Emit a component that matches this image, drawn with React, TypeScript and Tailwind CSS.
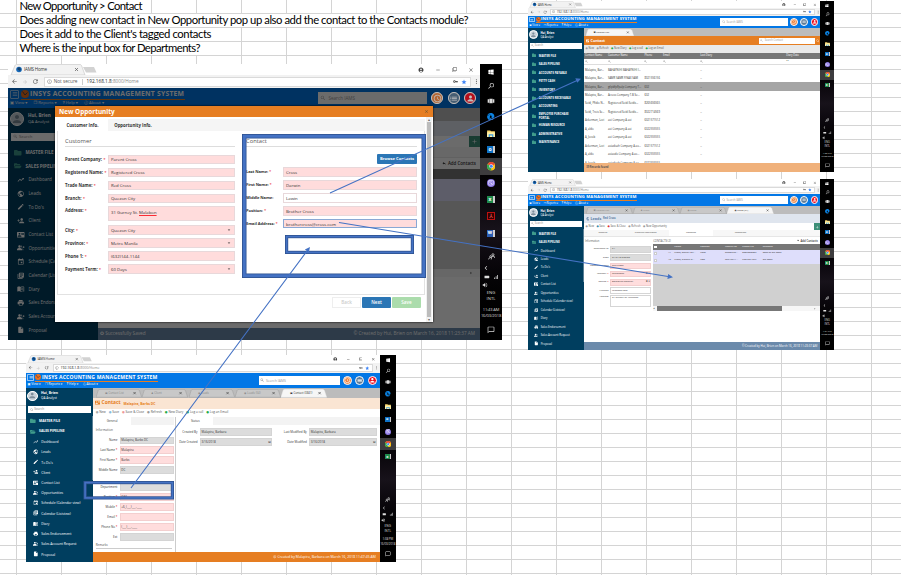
import type { ReactNode } from "react";
import { FaWindows, FaEdge, FaViber, FaFolder, FaFolderOpen } from "react-icons/fa";
import {
  MdTrendingUp, MdPublic, MdEdit, MdPersonAdd, MdContactMail, MdGroupAdd, MdEvent, MdLibraryBooks,
  MdMenuBook, MdPrint, MdInsertDriveFile, MdPerson, MdSearch, MdArrowBack, MdArrowForward, MdRefresh,
  MdInfoOutline, MdClose, MdRemove, MdFilterNone, MdAccountCircle, MdVpnKey, MdStar, MdMoreVert,
  MdMenu, MdAccessTime, MdList, MdArrowDropDown, MdArrowRight, MdAdd, MdReply, MdVolumeUp, MdChevronLeft,
  MdBatteryFull, MdSignalCellularAlt, MdChatBubbleOutline, MdCopyright, MdViewCarousel,
} from "react-icons/md";

const ORANGE = "bg-[#e67e22]";

/* ---------- taskbar ---------- */

function ChromeIcon() {
  return (
    <svg viewBox="0 0 20 20" className="size-[8.500px]">
      <circle cx="10" cy="10" r="10" fill="#fbc116" />
      <path d="M10 10 1.3 5A10 10 0 0 1 18.7 5Z" fill="#ea4335" />
      <path d="M10 10 1.3 5A10 10 0 0 0 10 20Z" fill="#34a853" />
      <circle cx="10" cy="10" r="4.6" fill="#fff" />
      <circle cx="10" cy="10" r="3.6" fill="#4285f4" />
    </svg>
  );
}

function Tile({ color, letter }: { color: string; letter: string }) {
  return (
    <span className="flex h-[7px] w-[8px] border-r-2 border-white/80">
      <span className={`flex h-full w-full items-center justify-center text-[5px] font-bold text-white ${color}`}>{letter}</span>
    </span>
  );
}

function ExplorerIcon() {
  return (
    <svg viewBox="0 0 20 18" className="h-[7px] w-[8px]">
      <path d="M0 1h8l2 2h10v15H0z" fill="#f8d56b" />
      <path d="M0 6h20v12H0z" fill="#fff0a8" />
      <path d="M4 11h12v7h-3v-4H7v4H4z" fill="#3b9be0" />
    </svg>
  );
}

const APP_ICONS: Record<string, ReactNode> = {
  edge: <FaEdge className="size-[7.500px] text-[#0c84e4]" />,
  explorer: <ExplorerIcon />,
  outlook: <Tile color="bg-[#0e72c6]" letter="o" />,
  chrome: <ChromeIcon />,
  viber: (
    <span className="flex size-[8px] items-center justify-center rounded-full bg-[#8f7be8]">
      <FaViber className="size-[6px] text-white" />
    </span>
  ),
  excel: <Tile color="bg-[#1f8a4c]" letter="x" />,
  adobe: <span className="flex size-[8px] items-center justify-center border border-[#b11] bg-[#300] text-[6px] text-[#f66]">⅄</span>,
  word: <Tile color="bg-[#2b5eb4]" letter="w" />,
};

function Taskbar({ apps, time }: { apps: string[]; time: string }) {
  return (
    <div className="flex w-[22px] shrink-0 flex-col items-center bg-linear-to-b from-black from-20% via-[#17121a] via-60% to-black text-[#ddd]">
      <div className="flex h-[15px] items-center"><FaWindows className="size-[6px] text-white" /></div>
      <div className="flex h-[14px] items-center"><MdSearch className="size-[8px] -scale-x-100" /></div>
      <div className="flex h-[15px] items-center"><MdViewCarousel className="size-[8px]" /></div>
      {apps.map((a) => (
        <div key={a} className={a === "chrome" ? "flex h-[16.7px] w-full items-center justify-center bg-[#3d3c3e]" : "flex h-[16.7px] w-full items-center justify-center"}>
          {APP_ICONS[a]}
        </div>
      ))}
      <svg viewBox="0 0 12 12" className="mt-auto mb-[3px] size-[7px]">
        <g fill="none" stroke="#ddd" strokeWidth="1.300"><circle cx="8.500" cy="3" r="1.800" /><circle cx="4.500" cy="6" r="1.500" /><path d="M5.500 11q0-5 3-5.500t3 3M1 11q.5-3.500 3.500-3.500" /></g>
      </svg>
      <div className="flex h-[10px] w-full items-center pl-[2px]"><MdChevronLeft className="size-[8px]" /></div>
      <div className="flex h-[8px] items-center gap-[3px]"><MdBatteryFull className="size-[6px] rotate-90" /><MdSignalCellularAlt className="size-[6px]" /></div>
      <div className="flex h-[8px] w-full items-center pl-[2px]"><MdVolumeUp className="size-[6px]" /></div>
      <div className="mt-[1px] text-center text-[4.2px] leading-[6px]">ENG<br />INTL</div>
      <div className="mt-[5px] text-center text-[4px] leading-[6px] tracking-[-0.1px] whitespace-nowrap">{time}<br />16/03/2018</div>
      <div className="flex h-[21px] items-center"><MdChatBubbleOutline className="size-[8px]" /></div>
    </div>
  );
}

/* ---------- browser and application header ---------- */

function BrowserBar({ insecure }: { insecure?: boolean }) {
  return (
    <>
      <div className="flex h-[11px] items-end bg-white pl-[2px] text-[#444]">
        <svg viewBox="0 0 90 11" className="h-[11px] w-[90px] shrink-0">
          <path d="M1 11 5 1.5Q5.500 .5 6.500 .5H70Q71 .5 71.500 1.500L75 11Z" fill="#f2f2f2" stroke="#c4c4c4" strokeWidth=".6" />
          <path d="M73 3h11l2.500 5.500H76Z" fill="#d2d2d2" />
          <circle cx="9" cy="5.500" r="2.800" fill="#1769b8" />
          <path d="M7 5 9 3l2 2-1 2z" fill="#123e6b" />
          <text x="14" y="7.300" fontSize="4.500" fill="#333" textLength="23">IAMS Home</text>
          <path d="m65 4 3 3m0-3-3 3" stroke="#555" strokeWidth=".7" />
        </svg>
        <div className="ml-auto flex h-full items-center gap-[11px] pr-[6px]">
          <MdAccountCircle className="size-[6px]" /><MdRemove className="size-[6px]" /><MdFilterNone className="size-[5px]" /><MdClose className="size-[6px]" />
        </div>
      </div>
      <div className="flex h-[13px] items-center bg-[#f2f2f2] pl-[3px] text-[#555]">
        <MdArrowBack className="mr-[4px] size-[7px]" />
        <MdArrowForward className="mr-[4px] size-[6px] text-[#c4c4c4]" />
        <MdRefresh className="mr-[5px] size-[7px]" />
        <div className="flex h-[10px] w-[433px] items-center border border-[#dadada] bg-white pl-[2px] text-[4.7px] whitespace-nowrap">
          <MdInfoOutline className="mr-[2px] size-[5px]" />
          {insecure && <><span>Not secure</span><span className="mx-[4px] h-[6px] w-px bg-[#ccc]" /></>}
          <span className="text-[#222]">192.168.1.8</span><span className="text-[#888]">:8000/Home</span>
          <MdVpnKey className="ml-auto size-[5px]" /><MdStar className="mx-[3px] size-[6px] text-[#3b82f6]" />
        </div>
        <MdMoreVert className="ml-[2px] size-[7px]" />
      </div>
    </>
  );
}

function HeaderButtons() {
  const ring = "flex size-[12px] items-center justify-center rounded-full border border-white text-white";
  return (
    <div className="flex gap-[4.300px]">
      <span className={`${ring} bg-[#ee8540]`}><MdAccessTime className="size-[9px]" /></span>
      <span className={`${ring} bg-[#5f7d99]`}><MdList className="size-[9px]" /></span>
      <span className={`${ring} bg-[#ee1122]`}><MdPerson className="size-[9px]" /></span>
    </div>
  );
}

function AppHeader() {
  return (
    <div className="flex h-[19.500px] shrink-0 bg-[#0277e6] text-white">
      <div className="flex flex-col pl-[2px]">
        <div className="flex h-[12px] items-center">
          <span className="flex size-[9px] items-center justify-center rounded-[1px] border border-white/60"><MdMenu className="size-[6px]" /></span>
          <div className="ml-[1.500px] flex h-[11.500px] items-center border-b border-[#e67e22]">
            <svg viewBox="0 0 16 16" className="size-[8px]">
              <circle cx="8" cy="8" r="8" fill="#f0701a" />
              <path d="m3 3 5 7 5-5" stroke="#55404a" strokeWidth="2" fill="none" />
            </svg>
            <svg className="ml-[1px] h-[9px] w-[155px]">
              <text x="0" y="7" fontSize="6.800" fontWeight="700" fill="#fff" textLength="154">INSYS ACCOUNTING MANAGEMENT SYSTEM</text>
            </svg>
          </div>
        </div>
        <div className="flex items-center gap-[6px] text-[4.200px] leading-[6.500px]">
          <span>▣ View ▾</span><span>❐ Reports ▾</span><span><b>?</b> Help ▾</span><span>ⓘ About ▾</span>
        </div>
      </div>
      <div className="mt-[4px] ml-auto flex h-[12px] w-[109px] items-center bg-white pl-[2px] text-[4.600px] text-[#999]">
        <MdSearch className="mr-[2px] size-[6px]" />Search IAMS
      </div>
      <div className="mt-[4px] mr-[4px] ml-[4px]"><HeaderButtons /></div>
    </div>
  );
}

/* ---------- sidebar ---------- */

const PIPELINE: [ReactNode, string][] = [
  [<MdTrendingUp />, "Dashboard"], [<MdPublic />, "Leads"], [<MdEdit />, "To Do's"], [<MdPersonAdd />, "Client"],
  [<MdContactMail />, "Contact List"], [<MdGroupAdd />, "Opportunities"], [<MdEvent />, "Schedule (Calendar view)"],
  [<MdLibraryBooks />, "Calendar (Listview)"], [<MdMenuBook />, "Diary"], [<MdPrint />, "Sales Endorsement"],
  [<MdGroupAdd />, "Sales Account Request"], [<MdInsertDriveFile />, "Proposal"],
];
const MODULES = ["MASTER FILE", "SALES PIPELINE", "ACCOUNTS PAYABLE", "PETTY CASH", "INVENTORY", "ACCOUNTS RECEIVABLE", "ACCOUNTING", "EMPLOYEE PURCHASE PORTAL", "HUMAN RESOURCE", "ADMINISTRATIVE", "MAINTENANCE"];

function Folder({ name, open }: { name: string; open?: boolean }) {
  const cls = "mr-[4px] size-[7.500px] shrink-0 text-[#3f9c8c]";
  return (
    <div className={`flex items-center pr-[14px] pl-[6px] text-[4.500px] leading-[6.500px] font-bold ${name.length > 20 ? "h-[17px]" : "h-[13.680px]"}`}>
      {open ? <FaFolderOpen className={cls} /> : <FaFolder className={cls} />}{name}
    </div>
  );
}

function Sidebar({ modules }: { modules?: boolean }) {
  return (
    <div className="flex w-[90px] shrink-0 flex-col overflow-hidden bg-[#003e5f] text-white">
      <div className="flex h-[22px] shrink-0 items-center pl-[2px]">
        <span className="flex size-[14px] items-end justify-center overflow-hidden rounded-full border border-white bg-[#c9d2d9]"><MdPerson className="size-[12px] text-[#7d8d9a]" /></span>
        <div className="ml-[4px] text-[4.600px] leading-[6.500px]"><b>Hui, Brien</b><br /><span className="text-[4.200px]">QA Analyst</span></div>
      </div>
      <div className="mx-[3px] mt-[3px] flex h-[8.500px] shrink-0 items-center bg-white pl-[2px] text-[4.200px] text-[#888]"><MdSearch className="mr-[1px] size-[5px]" />Search</div>
      <div className="mt-[4.500px] flex grow justify-between">
        <div>
          {modules ? MODULES.map((m) => <Folder key={m} name={m} />) : (
            <>
              <Folder name="MASTER FILE" />
              <Folder name="SALES PIPELINE" open />
              {PIPELINE.map(([icon, name]) => (
                <div key={name} className="flex h-[13.680px] items-center pl-[9px] text-[4.500px] whitespace-nowrap">
                  <span className="mr-[4px] text-[7.500px]">{icon}</span>{name}
                </div>
              ))}
            </>
          )}
        </div>
        {!modules && <div className="h-[85px] w-[1.500px] bg-[#5a7f95]" />}
      </div>
    </div>
  );
}

function TabStrip({ tabs, width }: { tabs: string[]; width: number }) {
  return (
    <div className="flex h-[13.500px] shrink-0 items-end bg-[#bcbcbc] pl-[3px]">
      {tabs.map((t, i) => {
        const on = i === tabs.length - 1;
        return (
          <svg key={t + i} viewBox={`0 0 ${width} 11`} className="h-[11px]" style={{ width }}>
            <path d={`M0 11 3 1.500Q3.500 .5 5 .5H${width - 7}Q${width - 5} .5 ${width - 4} 2L${width - 1} 11Z`} fill={on ? "#f6f6f6" : "#c8c8c8"} stroke={on ? "#eee" : "#999"} strokeWidth=".6" />
            <text x="12" y="7" fontSize="3.800" fill={on ? "#333" : "#888"}>{t}</text>
            <path d={`m${width - 12} 4 3 3m0-3-3 3`} stroke="#555" strokeWidth="1" />
          </svg>
        );
      })}
    </div>
  );
}

function Tools({ items }: { items: [string, string][] }) {
  return (
    <div className="flex items-center gap-[4px] pl-[3px] text-[4.200px] whitespace-nowrap text-[#555]">
      {items.map(([label, color]) => <span key={label}><span className={color}>● </span>{label}</span>)}
    </div>
  );
}

/* ---------- pages ---------- */

const CONTACT_ROWS = [
  ["Malapira, Bar...", "BAHAYNIHI BAHAYNIHI I...", ""], ["Malapira, Bar...", "SAMR SAMR FINAX SAM", "8321556156"],
  ["Malapira, Bar...", "gtlpbfplfpalp Company T...", "632"], ["Malapira, Bar...", "Access Company T.B Se...", "632"],
  ["Seidi, Pfidio N...", "Registered Seidi Seidis...", "8265656565"], ["Seidi, Trois Se...", "Registered Seidi Seidis...", "8322714569"],
  ["Ackerman, Levi", "aoi Company A aoi", "6321571512"], ["A, aldo", "aoi Company A aoi", "6322555555"],
  ["A, Jocob", "aoi Company A aoi", "6322555555"], ["Ackerman, Levi", "aoiadoah Company A ao...", "6321571512"],
  ["A, aldo", "aoiaodo Company A ao...", "6322555555"], ["A, Jocob", "aoiadoah Company A ao...", "6322555555"],
];
const LIST_GRID = "grid grid-cols-[37px_59px_30px_60px_139px_1fr] items-center pl-[2px] whitespace-nowrap";

function ContactListPage() {
  return (
    <>
      <TabStrip tabs={["▣ Contact List"]} width={78} />
      <div className={`flex h-[14.500px] items-center pl-[3px] text-[6px] font-bold text-white ${ORANGE}`}>
        <MdContactMail className="mr-[2px] size-[6px]" />Contact
        <div className="ml-auto flex h-[9px] w-[91px] items-center bg-white pl-[2px] text-[4.200px] font-normal text-[#999]"><MdSearch className="mr-[2px] size-[5px]" />Search Contact</div>
        <MdSearch className="mx-[1px] size-[6px]" />
      </div>
      <div className="flex h-[12px] bg-[#e9e9e9]"><Tools items={[["New", "text-[#999]"], ["Refresh", "text-[#999]"], ["New Diary", "text-[#2a4]"], ["Log a call", "text-[#2a4]"], ["Log an Email", "text-[#2a4]"]]} /></div>
      <div className={`${LIST_GRID} h-[9.500px] bg-[#777] text-[4.200px] text-white`}>
        <span>Contact Name</span><span>Customer Name</span><span>Phone</span><span>Email</span><span>Last Diary</span><span>Diary Date</span>
      </div>
      <div className={`${LIST_GRID} h-[11px] border-b border-[#ddd] text-[5px] text-[#777]`}>
        <MdSearch /><MdSearch /><MdSearch /><MdSearch /><MdSearch /><span>••</span>
      </div>
      <div className="h-[158px] overflow-hidden">
        {CONTACT_ROWS.map((r, i) => (
          <div key={i} className={`${LIST_GRID} h-[13.680px] text-[4.400px] text-[#333] ${i === 2 ? "bg-[#a5a5a5]" : ""}`}>
            <span>{r[0]}</span><span>{r[1]}</span><span>{r[2]}</span><span /><span>--</span>
          </div>
        ))}
      </div>
      <div className="flex grow items-center bg-[#f0b17b] pl-[4px] text-[4.200px] font-bold text-[#555]">39 Records found</div>
    </>
  );
}

type Box = { label: string; value: string; tone: "gray" | "pink" | "white"; req?: boolean; icons?: string; tall?: boolean };
const TONES = { gray: "bg-[#dcdcdc] border-[#d4d4d4]", pink: "bg-[#ffdddd] border-[#f3cfcf]", white: "bg-white border-[#d5d5d5]" };

function FieldRow({ f, labelW }: { f: Box; labelW: string }) {
  return (
    <div className={`flex text-[4px] text-[#333] ${f.tall ? "h-[22px] items-start" : "h-[13.300px] items-center"}`}>
      <span className={`shrink-0 pr-[3px] text-right whitespace-nowrap ${labelW}`}>{f.label}{f.req && <span className="text-red-600"> *</span>}</span>
      <span className={`flex grow justify-between border px-[1px] whitespace-nowrap ${TONES[f.tone]} ${f.tall ? "h-[20px] items-start" : "h-[10.500px] items-center"}`}>
        <span>{f.value}</span><span>{f.icons}</span>
      </span>
    </div>
  );
}

const LEAD_FIELDS: Box[] = [
  { label: "Reference ID", value: "54", tone: "gray" }, { label: "Date", value: "3/16/18 0:00:00", tone: "gray" },
  { label: "Company Name", value: "Red Cross", tone: "pink" }, { label: "Industry", value: "Telephone", tone: "pink", req: true, icons: "✚ ▾" },
  { label: "Source", value: "Employee Referral", tone: "pink", req: true, icons: "✚ ▾" }, { label: "Website", value: "redcross.com", tone: "white" },
  { label: "Address", value: "31 Gurney St. Malabon", tone: "white", tall: true },
];
const LEAD_CONTACTS = [
  ["41", "Cross, Oakley Bu...", "COO", "09086565...", "8086808089", "Boss of Big Boss"],
  ["42", "Cross, Darwin D...", "CEO", "60912341...", "6327234567", "Big Boss"],
];
const LEAD_GRID = "grid grid-cols-[10px_22px_42px_40px_28px_33px_1fr] items-center pl-[2px] text-[4px] whitespace-nowrap";

/* With `covered` the dialog lies over the page, so only its bands and right edge are drawn. */
function LeadPage({ covered, credit }: { covered?: boolean; credit: string }) {
  return (
    <>
      <TabStrip tabs={covered ? [] : ["▣ Contact List", "♟ Client", "◉ Leads", "◉ Leads (54)"]} width={76} />
      <div className="flex h-[14.500px] items-center bg-[#dfe5ee] pl-[3px] text-[6px] font-bold text-[#5d7fa5]">
        {!covered && <><MdPublic className="mr-[2px] size-[6px]" />Leads<span className="ml-[3px] text-[4.200px]">Red Cross</span></>}
      </div>
      <div className="flex h-[11px] justify-between">
        <Tools items={covered ? [] : [["New", "text-[#999]"], ["Save", "text-[#38a]"], ["Save & Close", "text-[#d33]"], ["Refresh", "text-[#999]"], ["New Opportunity", "text-[#999]"]]} />
        <span className="flex w-[11px] items-center justify-center bg-[#3d8f78] text-[7px] text-white"><MdAdd /></span>
      </div>
      <div className="flex h-[11.500px] items-center border-b border-[#e6e6e6] bg-[#f7f7f7] text-center text-[4px] text-[#444]">
        {!covered && <><span className="w-[62px]">General</span><span className="w-[76px]">Product/Interested</span><span className="flex h-full w-[70px] items-center justify-center bg-white">Contacts</span><span className="w-[90px]">Comment</span></>}
      </div>
      <div className="flex grow overflow-hidden bg-white">
        <div className="w-[112px] pr-[3px] pl-[2px]">
          {!covered && (
            <>
              <div className="h-[13px] pt-[5px] text-[4.200px] leading-[5px] text-[#555]">Information</div>
              {LEAD_FIELDS.map((f) => <FieldRow key={f.label} f={f} labelW="w-[41px]" />)}
            </>
          )}
        </div>
        <div className="flex grow flex-col">
          <div className="flex h-[11px] items-center justify-between pr-[4px] text-[4.400px] text-[#555]"><span>{!covered && "CONTACTS (2)"}</span><span className="flex items-center font-semibold text-[#333]"><MdReply className="mr-[2px]" />Add Contacts</span></div>
          <div className="h-[100px] bg-[#d0d0d0]">
            <div className={`${LEAD_GRID} h-[9.500px] bg-[#777] text-white`}>
              {!covered && <><span className="size-[4px] border bg-white" /><span /><span>Name</span><span>Position</span><span>Mobile No</span><span>Phone No</span><span>Remarks</span></>}
            </div>
            {LEAD_CONTACTS.map((r) => (
              <div key={r[0]} className={`${LEAD_GRID} h-[11px] bg-[#dedefb] text-[#333]`}>
                {!covered && <><span className="size-[5px] border border-[#ccc] bg-white" /><span className="pl-[12px]">{r[0]}</span>{r.slice(1).map((c) => <span key={c}>{c}</span>)}</>}
              </div>
            ))}
          </div>
          <div className="flex h-[8px] items-center bg-[#f6f6f6] text-[6px] text-[#444]"><span className="w-[6px] text-[4px]">◂</span><div className="h-[7px] w-[202px] bg-[#777]" /><MdArrowRight className="mr-[6px] ml-auto" /></div>
        </div>
      </div>
      <div className="flex h-[12.500px] shrink-0 items-center justify-between bg-[#6b8aab] pr-[5px] pl-[2px] text-[4.700px] text-white">
        <span>{covered && "✪ Successfully Saved"}</span><span>© Created by Hui, Brien on March 16, 2018 {credit}</span>
      </div>
    </>
  );
}

const CONTACT_TOP: Box[] = [
  { label: "Name", value: "Malapira, Barbs DC", tone: "gray" }, { label: "Last Name", value: "Malapira", tone: "pink", req: true },
  { label: "First Name", value: "Barbs", tone: "pink", req: true }, { label: "Middle Name", value: "DC", tone: "gray" },
];
const CONTACT_BOTTOM: Box[] = [
  { label: "Department", value: "", tone: "gray" }, { label: "Position", value: "QA1", tone: "pink", req: true },
  { label: "Mobile", value: "+6_(___)___-____", tone: "pink", req: true }, { label: "Email", value: "", tone: "pink", req: true },
  { label: "Phone No", value: "(___)___-____", tone: "pink", req: true }, { label: "Ext", value: "", tone: "gray" },
];

function ContactPage() {
  return (
    <>
      <TabStrip tabs={["▣ Contact List", "♟ Client", "◉ Leads", "◉ Leads (54)", "▣ Contact (3841)"]} width={62} />
      <div className="flex h-[14.500px] items-center bg-[#fae5d3] pl-[2px] text-[6.500px] font-bold text-[#e67e22]">
        <MdContactMail className="mr-[2px] size-[7px]" />Contact<span className="ml-[4px] text-[4.500px]">Malapira, Barbs DC</span>
      </div>
      <div className="flex h-[11.500px]"><Tools items={[["New", "text-[#aaa]"], ["Save", "text-[#8bd]"], ["Save & Close", "text-[#e99]"], ["Refresh", "text-[#999]"], ["New Diary", "text-[#2a4]"], ["Log a call", "text-[#2a4]"], ["Log an Email", "text-[#2a4]"]]} /></div>
      <div className="flex grow overflow-hidden">
        <div className="w-[110px] shrink-0 border-r-[1.500px] border-[#ccc] pr-[1.500px]">
          <div className="flex h-[10.500px] text-[4px] text-[#444]"><span className="w-[50px] pt-[2px] text-center">General</span><span className="grow bg-[#f3f3f3]" /></div>
          <div className="h-[14px] pt-[5px] pl-[3px] text-[4.200px] leading-[5px] text-[#555]">Information</div>
          {CONTACT_TOP.map((f) => <FieldRow key={f.label} f={f} labelW="w-[35px]" />)}
          <div className="h-[9px]" />
          {CONTACT_BOTTOM.map((f) => <FieldRow key={f.label} f={f} labelW="w-[35px]" />)}
          <div className="mr-[2px] ml-[3px] border-b border-[#ccc] text-[4px] leading-[9px] text-[#555]">Remarks</div>
        </div>
        <div className="grow pl-[2px]">
          <div className="flex h-[10.500px] text-[4px] text-[#444]"><span className="w-[48px] pt-[2px] text-center">Status</span><span className="grow bg-[#f3f3f3]" /></div>
          <div className="grid grid-cols-[127px_137px] gap-x-[3px] pt-[3px]">
            <FieldRow f={{ label: "Created By", value: "Malapira, Barbara", tone: "gray" }} labelW="w-[30px]" />
            <FieldRow f={{ label: "Last Modified By", value: "Malapira, Barbara", tone: "gray" }} labelW="w-[46px]" />
            <FieldRow f={{ label: "Date Created", value: "3/16/2018", tone: "gray", icons: "⊟" }} labelW="w-[30px]" />
            <FieldRow f={{ label: "Date Modified", value: "3/16/2018", tone: "gray", icons: "⊟" }} labelW="w-[46px]" />
          </div>
        </div>
      </div>
      <div className={`flex h-[12.500px] shrink-0 items-center justify-end gap-[1px] pr-[5px] text-[4.600px] text-white ${ORANGE}`}>
        <MdCopyright />Created by Malapira, Barbara on March 16, 2018 11:47:45 AM
      </div>
    </>
  );
}

/* ---------- new opportunity dialog ---------- */

function Input({ label, value, req = true, select, contact, tall, focus }: { label: string; value: ReactNode; req?: boolean; select?: boolean; contact?: boolean; tall?: boolean; focus?: boolean }) {
  return (
    <div className={`flex text-[4.300px] ${tall ? "h-[19px] items-start pt-[1px]" : "h-[12.950px] items-center"}`}>
      <span className={`shrink-0 font-bold whitespace-nowrap text-[#333] ${contact ? "w-[37px] text-[4.100px] tracking-[-0.1px]" : "w-[43px]"} ${tall ? "pt-[1px]" : ""}`}>{label} {req && <span className="font-normal text-red-600">*</span>}</span>
      <span className={`flex grow justify-between border px-[2px] text-[#333] ${req ? "bg-[#ffdcdc]" : "bg-white"} ${focus ? "border-[#8aa8d4]" : "border-[#e8d8da]"} ${tall ? "h-[15px] items-start pt-[2px]" : "h-[9.500px] items-center"}`}>
        <span>{value}</span>{select && <MdArrowDropDown className="size-[6px]" />}
      </span>
    </div>
  );
}

function OpportunityDialog() {
  return (
    <div className="absolute top-[42px] left-[47px] flex h-[216px] w-[378px] flex-col bg-white shadow-[0_0_2px_#000]">
      <div className={`flex h-[11px] shrink-0 items-center justify-between pr-[4px] pl-[4px] text-[6.400px] font-bold text-white ${ORANGE}`}>New Opportunity<MdClose className="size-[5px] text-[#653]" /></div>
      <div className="flex grow">
        <div className="flex grow flex-col pl-[2px]">
          <div className="mt-[2px] flex h-[12px] items-center bg-[#f5f5f5] text-[4.300px] font-bold text-[#333]">
            <span className="flex h-full w-[51px] items-center justify-center bg-white">Customer Info.</span><span className="w-[50px] text-center">Opportunity Info.</span>
          </div>
          <div className="flex h-[164px] border border-t-0 border-[#e2e2e2] pl-[7px]">
            <div className="w-[170px]">
              <div className="mb-[6px] h-[16px] border-b border-[#ddd] pt-[6px] text-[5.800px] leading-[8px] text-[#555]">Customer</div>
              <Input label="Parent Company:" value="Parent Cross" />
              <Input label="Registered Name:" value="Registered Cross" />
              <Input label="Trade Name:" value="Red Cross" />
              <Input label="Branch:" value="Quezon City" />
              <Input label="Address:" value={<>31 Gurney St. <u className="decoration-red-500">Malabon</u></>} tall />
              <Input label="City:" value="Quezon City" select />
              <Input label="Province:" value="Metro Manila" select />
              <Input label="Phone 1:" value="(632)144-1144" />
              <Input label="Payment Term:" value="60 Days" select />
            </div>
            <div className="ml-[11px] w-[171px]">
              <div className="h-[16px] border-b border-[#ddd] pt-[6px] text-[5.800px] leading-[8px] text-[#555]">Contact</div>
              <div className="mt-[7px] mb-[1.500px] ml-auto flex h-[10px] w-[40px] items-center justify-center rounded-[1px] bg-[#2b76b5] text-[4.100px] font-bold whitespace-nowrap text-white">Browse Contacts</div>
              <Input contact label="Last Name:" value="Cross" />
              <Input contact label="First Name:" value="Darwin" />
              <Input contact label="Middle Name:" value="Lawin" req={false} />
              <Input contact label="Position:" value="Brother Cross" />
              <Input contact label="Email Address:" value="brothercross@cross.com" focus />
            </div>
          </div>
          <div className="mt-[2px] flex justify-end gap-[1px] pr-[4px] text-[4.600px] font-semibold text-white">
            <span className="flex h-[11px] w-[29px] items-center justify-center border border-[#eee] text-[#ccc]">Back</span>
            <span className="flex h-[11px] w-[29px] items-center justify-center rounded-[1px] bg-[#2b76b5]">Next</span>
            <span className="flex h-[11px] w-[29px] items-center justify-center rounded-[1px] bg-[#abdcac]">Save</span>
          </div>
        </div>
        <div className="mx-[1px] flex w-[6px] flex-col items-center justify-between bg-[#f1f1f1] text-[4px] leading-[5px] text-[#666]"><span>▴</span><span className="w-[4px] grow bg-[#bcbcbc]" /><span>▾</span></div>
      </div>
    </div>
  );
}

/* ---------- pasted windows ---------- */

const APPS = ["edge", "explorer", "outlook", "viber", "chrome", "excel"];
const MAIN_APPS = ["edge", "explorer", "outlook", "chrome", "viber", "excel", "adobe", "word"];

function Screen({ children, modules, time, apps = APPS, dialog }: { children: ReactNode; modules?: boolean; time: string; apps?: string[]; dialog?: boolean }) {
  return (
    <div className="flex h-[276px] w-[494px] overflow-hidden bg-white">
      <div className="relative flex w-[472px] shrink-0 flex-col">
        <BrowserBar insecure={dialog} />
        <AppHeader />
        <div className="flex min-h-0 grow">
          <Sidebar modules={modules} />
          <div className="flex min-w-0 grow flex-col">{children}</div>
        </div>
        {dialog && (
          <>
            <div className="absolute inset-x-0 top-[24px] bottom-0 bg-black/58" />
            <div className="absolute top-[28px] right-[4px] brightness-75"><HeaderButtons /></div>
            <OpportunityDialog />
          </>
        )}
      </div>
      <Taskbar apps={apps} time={time} />
    </div>
  );
}

const NOTES: [string, string, number][] = [
  ["New Opportunity > Contact", "w-[134px]", 123], ["Does adding new contact in New Opportunity pop up also add the contact to the Contacts module?", "w-[494px]", 449],
  ["Does it add to the Client's tagged contacts", "w-[224px]", 192], ["Where is the input box for Departments?", "w-[224px]", 181],
];

function Frame({ x, y, w, h, t }: { x: number; y: number; w: number; h: number; t: number }) {
  return (
    <g fill="none">
      <rect x={x + t / 2} y={y + t / 2} width={w - t} height={h - t} stroke="#2f528f" strokeWidth={t} />
      <rect x={x + t / 2} y={y + t / 2} width={w - t} height={h - t} stroke="#4472c4" strokeWidth={t - 1.6} />
    </g>
  );
}

export default function App() {
  return (
    <div className="relative h-[575px] w-[901px] overflow-hidden bg-white [background-image:linear-gradient(to_right,#d4d4d4_1px,transparent_1px),linear-gradient(to_bottom,#d4d4d4_1px,transparent_1px)] [background-position:16px_13px] [background-size:45px_14px] font-['Open_Sans','DejaVu_Sans',sans-serif]">
      <div className="flex flex-col gap-px pl-[17px]">
        {NOTES.map(([text, width, length]) => (
          <div key={text} className={`h-[13px] bg-white ${width}`}>
            <svg className="h-[13px] w-full overflow-visible font-['Lato',sans-serif]">
              <text x="2.500" y="10" fontSize="11.300" fill="#000" textLength={length}>{text}</text>
            </svg>
          </div>
        ))}
      </div>
      <div className="absolute top-[64px] left-[8px]"><Screen time="11:43 AM" apps={MAIN_APPS} dialog><LeadPage covered credit="11:23:37 AM" /></Screen></div>
      <div className="absolute top-px left-[528px]"><div className="[zoom:0.6195]"><Screen time="1:32 PM" modules><ContactListPage /></Screen></div></div>
      <div className="absolute top-[179px] left-[528px]"><div className="[zoom:0.6195]"><Screen time="1:34 PM"><LeadPage credit="11:23:37 AM" /></Screen></div></div>
      <div className="absolute top-[355px] left-[26px]"><div className="[zoom:0.749]"><Screen time="1:38 PM"><ContactPage /></Screen></div></div>
      <svg viewBox="0 0 901 575" className="pointer-events-none absolute inset-0 h-[575px] w-[901px]">
        <Frame x={242} y={134} w={184} h={144} t={4.5} />
        <Frame x={285} y={235} w={129} h={19} t={3.2} />
        <Frame x={83.500} y={481} w={90.500} h={18.500} t={3.2} />
        <g stroke="#4472c4" strokeWidth="1.1">
          <path d="M330 193 577 80.500M339 222.500 668 276.500M131 488 307 251" />
        </g>
        <g fill="#4472c4">
          <path d="m581 78.700-3.700 4-2-4.400zM673 277.300l-5.600 1.700.8-4.900zM310 247l-1.200 5.500-3.900-2.900z" />
        </g>
      </svg>
    </div>
  );
}
